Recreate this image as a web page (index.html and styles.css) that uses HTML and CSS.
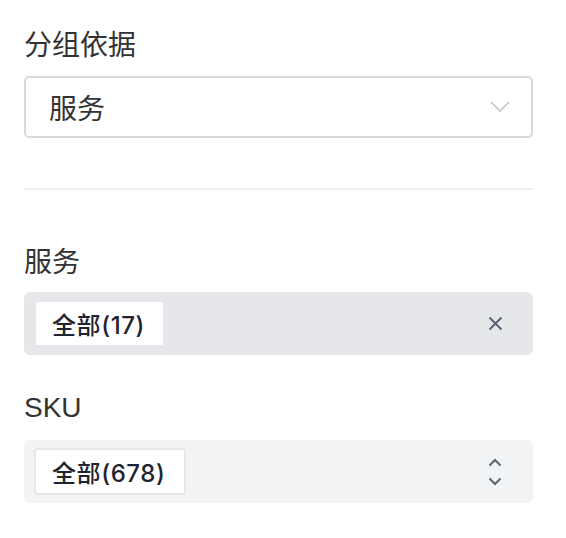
FILE: index.html
```html
<!DOCTYPE html>
<html lang="zh-CN">
<head>
<meta charset="utf-8">
<title>分组</title>
<link rel="stylesheet" href="styles.css">
</head>
<body>
<div class="panel">
  <div class="field">
    <div class="label">分组依据</div>
    <div class="select">
      <span class="select-value">服务</span>
      <svg class="chevron" width="20" height="11" viewBox="0 0 20 11"><path d="M1 1 L10 10 L19 1" fill="none" stroke="#c4c4c4" stroke-width="1.6"/></svg>
    </div>
  </div>
  <div class="divider"></div>
  <div class="field field--spaced">
    <div class="label">服务</div>
    <div class="tagbox tagbox--dark">
      <span class="tag">全部(17)</span>
      <svg class="icon-close" width="15" height="15" viewBox="0 0 15 15"><path d="M1.5 1.5 L13.5 13.5 M13.5 1.5 L1.5 13.5" fill="none" stroke="#5b6472" stroke-width="2"/></svg>
    </div>
  </div>
  <div class="field field--sku">
    <div class="label label--latin">SKU</div>
    <div class="tagbox tagbox--light">
      <span class="tag">全部(678)</span>
      <svg class="icon-updown" width="14" height="28" viewBox="0 0 14 28"><path d="M1.5 7.5 L7 2 L12.5 7.5 M1.5 20.5 L7 26 L12.5 20.5" fill="none" stroke="#5b6472" stroke-width="2"/></svg>
    </div>
  </div>
</div>
</body>
</html>
```

FILE: styles.css
```css
html, body {
  margin: 0;
  padding: 0;
  background: #ffffff;
}

.panel {
  width: 509px;
  padding: 23px 0 0 24px;
  font-family: "Noto Sans CJK SC", sans-serif;
}

.field {
  display: flex;
  flex-direction: column;
}

.field--spaced {
  margin-top: 50px;
}

.field--sku {
  margin-top: 33px;
}

.label {
  font-size: 28px;
  line-height: 40px;
  height: 40px;
  color: #333333;
  margin-bottom: 13px;
}

.label--latin {
  font-family: "Liberation Sans", "Noto Sans CJK SC", sans-serif;
}

.field--spaced .label,
.field--sku .label {
  margin-bottom: 12px;
}

.select {
  box-sizing: border-box;
  height: 62px;
  border: 2px solid #dadada;
  border-radius: 5px;
  padding: 0 21px 0 23px;
  display: flex;
  align-items: center;
  justify-content: space-between;
}

.select-value {
  font-size: 28px;
  color: #333333;
  line-height: 40px;
}

.chevron {
  display: block;
  margin-top: -2px;
}

.divider {
  height: 2px;
  background: #eeeeee;
  margin-top: 50px;
}

.tagbox {
  box-sizing: border-box;
  height: 63px;
  border-radius: 6px;
  padding: 8px 30px 8px 10px;
  display: flex;
  align-items: center;
  justify-content: space-between;
}

.tagbox--dark {
  background: #e5e7eb;
}

.tagbox--light {
  background: #f2f3f5;
}

.tag {
  box-sizing: border-box;
  height: 47px;
  display: flex;
  align-items: center;
  padding: 0 18px 0 16px;
  background: #ffffff;
  border: 2px solid #e5e7eb;
  border-radius: 4px;
  font-family: Inter, "Noto Sans CJK SC", sans-serif;
  font-size: 24px;
  font-weight: 500;
  letter-spacing: 0.6px;
  color: #1f2430;
}

.icon-close,
.icon-updown {
  display: block;
}

.icon-updown {
  margin-right: 1px;
}
```
